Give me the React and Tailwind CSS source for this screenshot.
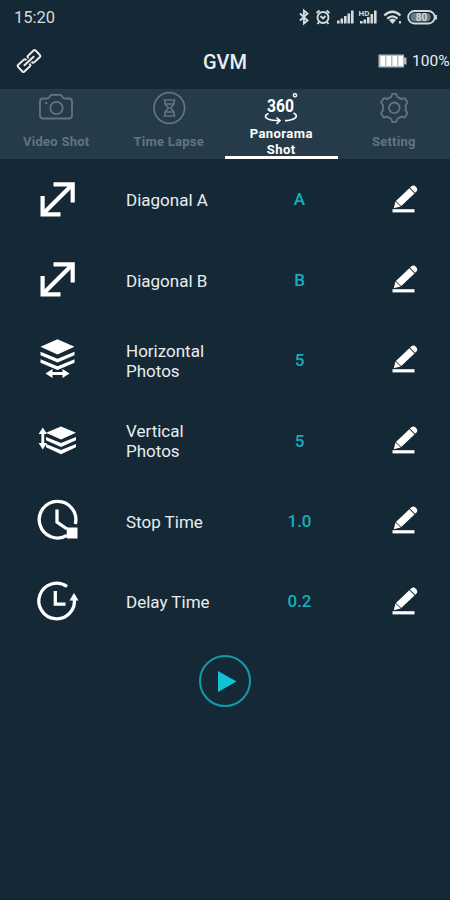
const tabs = [
  { label: 'Video Shot', Icon: CameraIcon },
  { label: 'Time Lapse', Icon: HourglassIcon },
  { label: 'Panorama Shot', Icon: PanoramaIcon, active: true },
  { label: 'Setting', Icon: GearIcon },
];

const rows = [
  { label: 'Diagonal A', value: 'A', Icon: DiagonalIcon },
  { label: 'Diagonal B', value: 'B', Icon: DiagonalIcon },
  { label: 'Horizontal Photos', value: '5', Icon: HorizontalIcon },
  { label: 'Vertical Photos', value: '5', Icon: VerticalIcon },
  { label: 'Stop Time', value: '1.0', Icon: StopIcon },
  { label: 'Delay Time', value: '0.2', Icon: DelayIcon },
];

function CameraIcon() {
  return (
    <svg className="h-9 w-9 shrink-0" viewBox="0 0 36 36" fill="none" stroke="currentColor" strokeWidth="1.8">
      <path d="M5 7.500H9.500Q11 7.500 11.500 6L12.500 4.500Q13 3.800 14 3.800H22Q23 3.800 23.500 4.500L24.500 6Q25 7.500 26.500 7.500H31Q34 7.500 34 10.500V24.500Q34 27.500 31 27.500H5Q2 27.500 2 24.500V10.500Q2 7.500 5 7.500Z" />
      <circle cx="18.500" cy="17" r="6.200" />
      <path d="M7 12H9.500" />
    </svg>
  );
}

function HourglassIcon() {
  return (
    <svg className="h-9 w-9 shrink-0" viewBox="0 0 36 36" fill="none" stroke="currentColor" strokeWidth="1.7">
      <circle cx="18.300" cy="17" r="15.300" />
      <path d="M12.500 9H24.500M12.500 25H24.500" />
      <path d="M14 9.500V13L17.500 17L14 21V24.500M23 9.500V13L19.500 17L23 21V24.500M14.500 13H22.500M14.500 21H22.500" />
    </svg>
  );
}

function PanoramaIcon() {
  return (
    <svg className="h-9 w-9 shrink-0" viewBox="0 0 36 36" fill="none" stroke="currentColor" strokeWidth="1.6">
      <text x="4" y="22" textLength="27" lengthAdjust="spacingAndGlyphs" fontSize="19" fontWeight="700" fill="currentColor" stroke="none" fontFamily="Roboto, sans-serif">360</text>
      <circle cx="32" cy="5.300" r="1.600" strokeWidth="1.400" />
      <path d="M5.500 23.500C1.500 25 1.500 27.500 5 29C8 30.200 12 30.600 16.500 30.600M13.500 27.500L17 30.600L13.500 34M30.500 23C35 25 34 28.300 28.500 29.700C26 30.300 24 30.600 22 30.600" />
    </svg>
  );
}

function GearIcon() {
  return (
    <svg className="h-9 w-9 shrink-0" viewBox="0 0 36 36" fill="none" stroke="currentColor" strokeWidth="1.8" strokeLinejoin="round">
      <path d="M16.300 2.800H20.300L21.500 6.200Q23.500 6.800 25 8L28.700 7.200L31.500 11.300L29.500 14.500Q30 16.800 29.500 19L31.500 22.200L28.700 26.500L25 25.700Q23.500 26.900 21.500 27.500L20.300 30.800H16.300L15 27.500Q13 26.900 11.500 25.700L7.800 26.500L5 22.200L7.200 19Q6.700 16.800 7.200 14.500L5 11.300L7.800 7.200L11.500 8Q13 6.800 15 6.200Z" />
      <circle cx="18.300" cy="16.800" r="5.300" />
    </svg>
  );
}

function DiagonalIcon() {
  return (
    <svg className="h-12 w-12" viewBox="0 0 48 48" fill="none" stroke="currentColor" strokeWidth="4.200">
      <path d="M20.500 8.300H39.700V26.500M9.600 20V38.300H27.500M39.500 8.500L9.800 38.100" />
    </svg>
  );
}

function HorizontalIcon() {
  return (
    <svg className="h-12 w-12" viewBox="0 0 48 48" fill="currentColor">
      <path d="M24.500 3.200L41.500 10.800L24.500 18.600L7.500 10.800Z" />
      <path d="M7.500 15.800L24.500 22.700L41.500 15.800V19.300L24.500 26.500L7.500 19.300Z" />
      <path d="M7.500 23.300L24.500 30.200L41.500 23.300V26.800L24.500 34L7.500 26.800Z" />
      <path d="M12.500 37.500L19.500 33V36.100H29.500V33L36.500 37.500L29.500 42V38.900H19.500V42Z" />
    </svg>
  );
}

function VerticalIcon() {
  return (
    <svg className="h-12 w-12" viewBox="0 0 48 48" fill="currentColor">
      <path d="M28 9.500L43 15.800L28 22.600L13 15.800Z" />
      <path d="M13 19.900L28 26L43 19.900V23.200L28 29.900L13 23.200Z" />
      <path d="M13 26.900L28 33L43 26.900V30.200L28 37.200L13 30.200Z" />
      <path d="M9.800 10.500L14 17H11.200V26H14L9.800 32.500L5.600 26H8.400V17H5.600Z" />
    </svg>
  );
}

function StopIcon() {
  return (
    <svg className="h-12 w-12" viewBox="0 0 48 48" fill="none" stroke="currentColor" strokeWidth="3.300">
      <path d="M34 38.300A18.300 18.300 0 1 1 42.300 27" />
      <path d="M24 12.500V25.200L34 32" strokeWidth="3.300" />
      <path d="M33.700 30.500H44.500V41.500H33.700Z" fill="currentColor" stroke="none" />
    </svg>
  );
}

function DelayIcon() {
  return (
    <svg className="h-12 w-12" viewBox="0 0 48 48" fill="none" stroke="currentColor" strokeWidth="3.300">
      <path d="M34 8.500A17.800 17.800 0 1 0 41.200 20" />
      <path d="M22.300 13V26.200H32.500" />
      <path d="M41 15L45.500 22.500H36.500Z" fill="currentColor" stroke="none" />
    </svg>
  );
}

function PencilIcon() {
  return (
    <svg className="h-8 w-8" viewBox="0 0 32 32" fill="currentColor">
      <path d="M3.500 25.200H25.500V28.400H3.500Z" />
      <path d="M4.800 24.200L6.400 17.600L11.700 22.500ZM6.900 17L20.300 4.200L25.500 9.400L12.200 22ZM20.900 3.600L22.500 2.200Q24.700 .7 27.100 2.900Q29.300 5.400 27.500 7.500L26.100 8.800Z" />
    </svg>
  );
}

function LinkIcon() {
  return (
    <svg className="h-7 w-7" viewBox="0 0 28 28" fill="none" stroke="currentColor" strokeWidth="2">
      <g transform="rotate(-43 14 14)" strokeLinejoin="round">
        <path d="M12.500 11.800V10.800Q12.500 9.500 11.200 9.500H3.200Q2 9.500 2 10.800V17.200Q2 18.500 3.200 18.500H11.200Q12.500 18.500 12.500 17.200V16.200" />
        <path d="M15.500 11.800V10.800Q15.500 9.500 16.800 9.500H24.800Q26 9.500 26 10.800V17.200Q26 18.500 24.800 18.500H16.800Q15.500 18.500 15.500 17.200V16.200" />
        <path d="M7 14H21" strokeWidth="2" />
      </g>
    </svg>
  );
}

function StatusIcons() {
  return (
    <svg className="h-5 w-[140px]" viewBox="298 6 140 20" fill="none" stroke="currentColor" strokeWidth="1.900">
      <path d="M300 12.500L307.500 19.500L303.900 22.500V9.500L307.500 12.500L300 19.500" />
      <circle cx="323" cy="16.500" r="5.500" />
      <path d="M316.500 12L319.500 9.500M329.500 12L326.500 9.500M319.500 20.500L317.500 23M326.500 20.500L328.500 23M320.500 15L323 17.500L325.500 15" />
      <path strokeWidth="2.600" d="M338.300 19.500V22.500M341.800 17.500V22.500M345.300 15V22.500M348.800 12.500V22.500M352.300 9.500V22.500" />
      <path strokeWidth="2.600" d="M361.300 20V22.500M364.800 18.500V22.500M368.300 16V22.500M371.800 13V22.500M375.300 9.500V22.500" />
      <text x="358.500" y="14.500" fontSize="8" fontWeight="700" fill="currentColor" stroke="none" fontFamily="Roboto, sans-serif">HD</text>
      <path strokeWidth="2.300" d="M384.300 14.500Q392.500 7 400.500 14.500M387.300 17.700Q392.500 13 397.500 17.700" />
      <path d="M389 19Q392.500 16.300 396 19L392.500 23Z" fill="currentColor" stroke="none" />
      <path d="M400 20V22.500" />
      <rect x="408.200" y="10" width="26.500" height="12.500" rx="6.200" strokeWidth="1.800" />
      <rect x="410.500" y="12.100" width="20" height="8.300" rx="4" fill="#6b7a82" stroke="none" />
      <path d="M436 14V18.500" />
      <text x="421.500" y="19.900" fontSize="10" fontWeight="700" textAnchor="middle" fill="currentColor" stroke="none" fontFamily="Roboto, sans-serif">80</text>
    </svg>
  );
}

function BatteryIcon() {
  return (
    <svg className="h-4 w-[29px]" viewBox="0 0 29 16">
      <path d="M.5 1.500H26V4.500H28.500V11.500H26V14.500H.5Z" fill="#b5bcc0" />
      <path d="M2.500 3H7V13H2.500ZM8.500 3H13V13H8.500ZM14.500 3H19V13H14.500ZM20.500 3H25V13H20.500Z" fill="#fff" />
    </svg>
  );
}

export default function App() {
  return (
    <div className="flex h-[900px] w-[450px] flex-col overflow-hidden border-b border-[#10203a] bg-[#142935] font-['Roboto',sans-serif] text-[#e9edef]">
      <div className="flex h-[33px] items-center justify-between pr-3 pl-[14px] text-[#d5dadd]">
        <span className="pt-[2px] text-[16.5px] leading-5">15:20</span>
        <StatusIcons />
      </div>

      <header className="grid h-14 grid-cols-[1fr_100px_1fr] items-center">
        <div className="pl-[15px]">
          <LinkIcon />
        </div>
        <h1 className="pt-px text-center text-[20px] font-medium">GVM</h1>
        <div className="flex items-center justify-end gap-[5px]">
          <BatteryIcon />
          <span className="w-[38px] pt-px text-[15.5px] whitespace-nowrap">100%</span>
        </div>
      </header>

      <nav className="grid h-[70px] grid-cols-4 bg-[#253b4a]">
        {tabs.map(({ label, Icon, active }) => (
          <button
            key={label}
            className={
              active
                ? 'flex h-[70px] flex-col items-center justify-start overflow-hidden border-b-[3px] border-white pt-px text-white'
                : 'flex flex-col items-center pt-[2px] text-[#64737e]'
            }
          >
            <Icon />
            <span
              className={
                active
                  ? 'w-[80px] shrink-0 text-center text-[13px] leading-4 font-bold tracking-[0.45px]'
                  : 'pt-[7px] text-[13px] leading-4 font-bold tracking-[0.25px]'
              }
            >
              {label}
            </span>
          </button>
        ))}
      </nav>

      <main>
        {rows.map(({ label, value, Icon }) => (
          <div key={label} className="grid h-[80.4px] grid-cols-[114px_130px_111px_95px] items-center">
            <div className="flex justify-center pt-px text-white">
              <Icon />
            </div>
            <div className="w-[100px] pt-[2px] pl-3 text-[17px] leading-5">{label}</div>
            <div className="pt-[2px] text-center text-[17px] font-medium text-[#18aebd]">{value}</div>
            <div className="flex justify-center pt-px pl-[5px] text-white">
              <PencilIcon />
            </div>
          </div>
        ))}
      </main>

      <button className="mt-[13px] flex h-[54px] w-[54px] items-center justify-center self-center">
        <svg className="h-[54px] w-[54px]" viewBox="0 0 54 54">
          <circle cx="27" cy="27" r="25" fill="none" stroke="#1699a8" strokeWidth="2" />
          <path d="M20 17L38.500 27.500L20 38Z" fill="#10c3d6" />
        </svg>
      </button>
    </div>
  );
}
